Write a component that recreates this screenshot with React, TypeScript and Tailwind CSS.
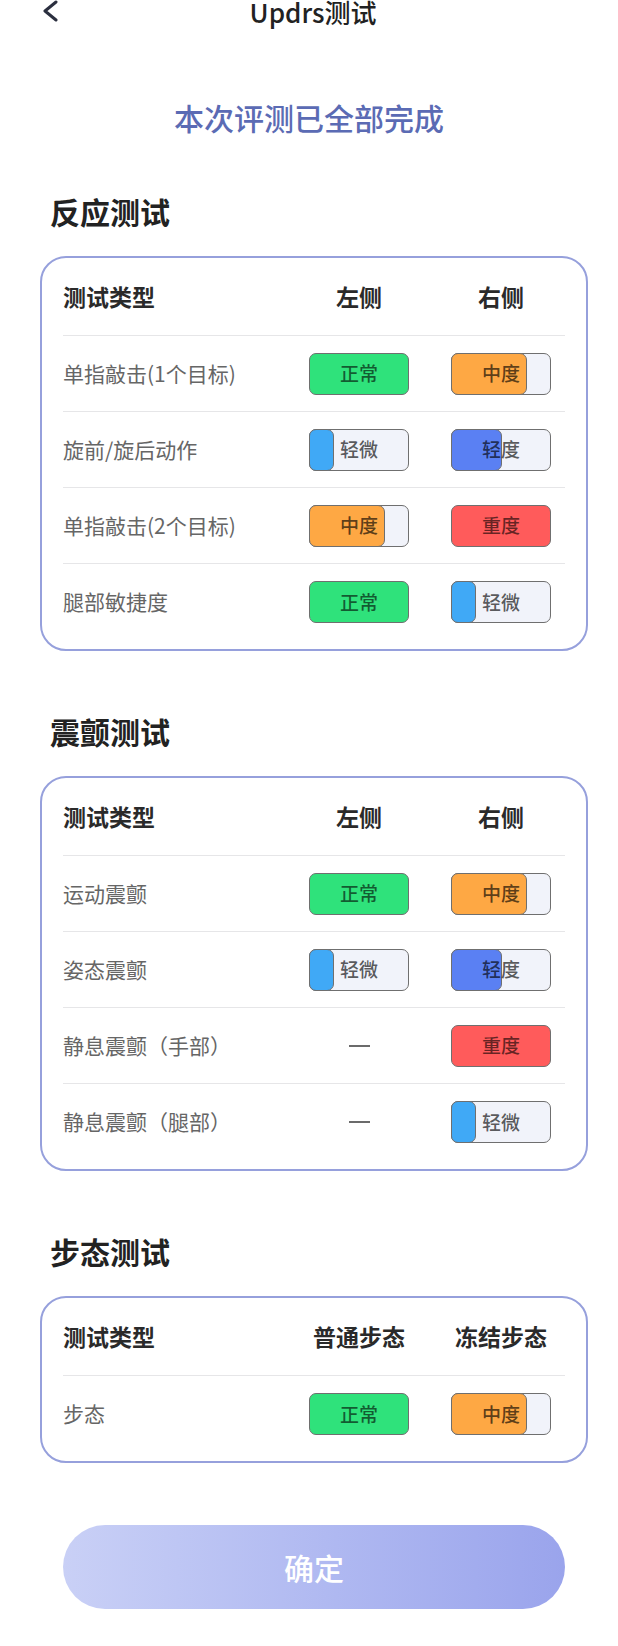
import React from "react";

type Level = "normal" | "slight" | "mild" | "moderate" | "severe" | "none";

interface Row {
  name: string;
  left: Level;
  right: Level;
}

interface Section {
  title: string;
  cols: [string, string];
  rows: Row[];
}

const sections: Section[] = [
  {
    title: "反应测试",
    cols: ["左侧", "右侧"],
    rows: [
      { name: "单指敲击(1个目标)", left: "normal", right: "moderate" },
      { name: "旋前/旋后动作", left: "slight", right: "mild" },
      { name: "单指敲击(2个目标)", left: "moderate", right: "severe" },
      { name: "腿部敏捷度", left: "normal", right: "slight" },
    ],
  },
  {
    title: "震颤测试",
    cols: ["左侧", "右侧"],
    rows: [
      { name: "运动震颤", left: "normal", right: "moderate" },
      { name: "姿态震颤", left: "slight", right: "mild" },
      { name: "静息震颤（手部）", left: "none", right: "severe" },
      { name: "静息震颤（腿部）", left: "none", right: "slight" },
    ],
  },
  {
    title: "步态测试",
    cols: ["普通步态", "冻结步态"],
    rows: [{ name: "步态", left: "normal", right: "moderate" }],
  },
];

const LevelBadge = ({ level }: { level: Level }) => {
  if (level === "none") {
    return (
      <div className="flex h-[42px] w-[100px] items-center justify-center">
        <span className="h-[2px] w-[21px] bg-[#6b6b6b]" />
      </div>
    );
  }
  if (level === "normal" || level === "severe") {
    const bg = level === "normal" ? "bg-[#2fe27b]" : "bg-[#ff5b5b]";
    return (
      <div
        className={`flex h-[42px] w-[100px] items-center justify-center rounded-[7px] border border-[#6f6f6f] ${bg}`}
      >
        <span className="text-[19px] font-medium text-black/60">
          {level === "normal" ? "正常" : "重度"}
        </span>
      </div>
    );
  }
  const fill =
    level === "slight"
      ? { cls: "w-[25px] bg-[#40a9f6]", text: "轻微" }
      : level === "mild"
        ? { cls: "w-[51px] bg-[#5a80f3]", text: "轻度" }
        : { cls: "w-[76px] bg-[#fea844]", text: "中度" };
  return (
    <div className="relative flex h-[42px] w-[100px] items-center justify-center rounded-[7px] border border-[#6f6f6f] bg-[#f1f3fa]">
      <div
        className={`absolute -top-px -bottom-px -left-px rounded-[7px] border border-[#6f6f6f] ${fill.cls}`}
      />
      <span className="relative text-[19px] font-medium text-black/65">
        {fill.text}
      </span>
    </div>
  );
};

const ResultCard = ({ section }: { section: Section }) => {
  return (
    <>
      <h2 className="mt-[62px] ml-[10px] text-[30px] font-semibold leading-[36px] text-[#222]">
        {section.title}
      </h2>
      <div className="mt-[27px] rounded-[26px] border-[2.5px] border-[#96a0dc] px-[21px] pb-[9px]">
        <div className="flex h-[78px] items-center border-b border-[#e6e6e8] pr-[14px]">
          <span className="flex-1 text-[23px] font-bold text-[#2a2a2a]">
            测试类型
          </span>
          <span className="w-[100px] text-center text-[23px] font-bold text-[#2a2a2a]">
            {section.cols[0]}
          </span>
          <span className="ml-[42px] w-[100px] text-center text-[23px] font-bold text-[#2a2a2a]">
            {section.cols[1]}
          </span>
        </div>
        {section.rows.map((row, i) => (
          <div
            key={row.name}
            className={`flex h-[76px] items-center pr-[14px] ${
              i < section.rows.length - 1 ? "border-b border-[#e6e6e8]" : ""
            }`}
          >
            <span className="flex-1 text-[21px] text-[#666]">{row.name}</span>
            <LevelBadge level={row.left} />
            <div className="ml-[42px]">
              <LevelBadge level={row.right} />
            </div>
          </div>
        ))}
      </div>
    </>
  );
};

export default function App() {
  return (
    <div
      className="min-h-[1646px] w-full bg-white pb-[40px]"
      style={{ fontFamily: '"Noto Sans CJK SC", "Noto Sans", sans-serif' }}
    >
      <div className="grid h-[24px] grid-cols-[1fr_auto_1fr] items-center">
        <div className="pl-[42px]">
          <svg width="18" height="22" viewBox="0 0 18 22" className="-mt-[2px]">
            <polyline
              points="14,2 3,11 14,20"
              fill="none"
              stroke="#2b2f3f"
              strokeWidth="3"
              strokeLinecap="round"
              strokeLinejoin="round"
            />
          </svg>
        </div>
        <span className="pl-[8px] text-[26px] leading-[24px] font-medium text-[#222]">
          Updrs测试
        </span>
        <div />
      </div>

      <p className="mt-[73px] text-center text-[30px] leading-[40px] font-medium text-[#5b6bb4]">
        本次评测已全部完成
      </p>

      <div className="-mt-[6px] pr-[30px] pl-[40px]">
        {sections.map((s) => (
          <ResultCard key={s.title} section={s} />
        ))}

        <button className="mx-[23px] mt-[62px] flex h-[84px] w-[502px] items-center justify-center rounded-full bg-gradient-to-r from-[#c9d0f6] to-[#9aa4ec] text-[30px] font-medium text-white">
          确定
        </button>
      </div>
    </div>
  );
}
